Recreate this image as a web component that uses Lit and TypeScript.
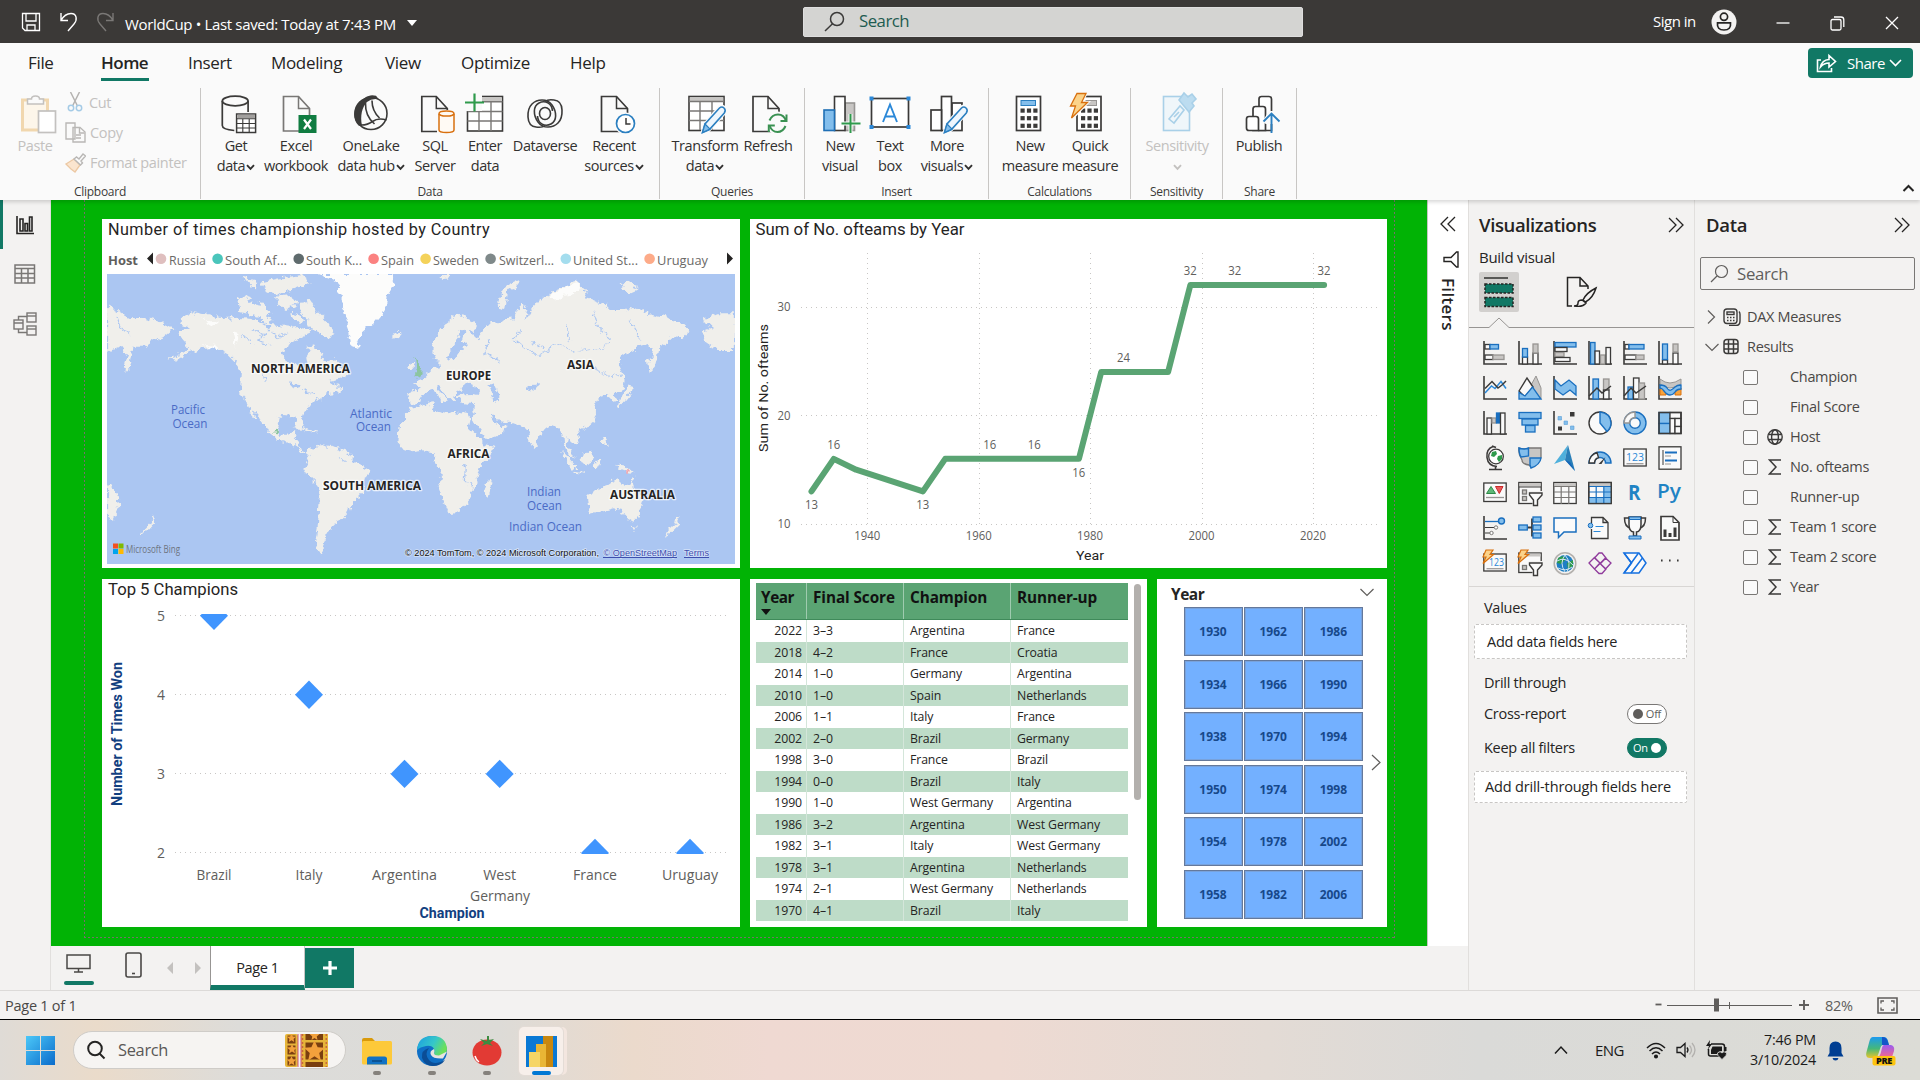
import { LitElement, html, svg, css, nothing } from "lit";
import { customElement, property } from "lit/decorators.js";

/* ---------- shared drawing helpers ---------- */
const INK = "#3b3a39";
const UI = "'Open Sans','Noto Sans',sans-serif";

/** SVG text fitted to the width given. */
const fit = (x: number, y: number, w: number, size: number, text: string, fill = "#605e5c", weight = 400, family = UI) =>
  svg`<text x=${x} y=${y} textLength=${w} lengthAdjust="spacingAndGlyphs" font-size=${size} font-weight=${weight} font-family=${family} fill=${fill}>${text}</text>`;

const chev = (cls = "") => html`<svg class="chev ${cls}" width="9" height="7" viewBox="0 0 9 7"><path d="M1 1.2 4.5 4.9 8 1.2" fill="none" stroke="currentColor" stroke-width="1.9"/></svg>`;
const docPath = (x: number, w: number, h = 35, s = INK) =>
  svg`<path d="M${x} 2.5h${w - 11}l11 12v${h - 12}h${-w}z" fill="#fafafa" stroke=${s} stroke-width="1.7"/><path d="M${x + w - 11} 2.5v12h11" fill="none" stroke=${s} stroke-width="1.5"/>`;
const pencil = svg`<path d="M-7 38.5l2.5-8L10 13.500q2-2 4.500 0t.5 5L-1 36z" fill="#fafafa" stroke="#fafafa" stroke-width="4"/><path d="M-7 38.5l2.500-8.500L10 14q2.300-2 4.500 0t.3 5L0 35.500z" fill="#eef6fd" stroke="#2b7fc0" stroke-width="1.6"/><path d="M-7 38.500l2.500-8.500 5 5z" fill="#83beec" stroke="#2b7fc0" stroke-width="1.2"/>`;
const dots = (x: number, y: number) => [0, 1, 2].map((r) => [0, 1, 2].map((c) => svg`<rect x=${x + c * 6.4} y=${y + r * 7.6} width="4.200" height="4.200" fill=${INK}/>`));

const RIBBON: Record<string, unknown> = {
  getdata: svg`<g fill="none" stroke=${INK} stroke-width="1.7"><ellipse cx="-.8" cy="7" rx="12.900" ry="4.800"/><path d="M-13.700 7v24.500q0 4 12 5M12.100 7v11"/></g><rect x=".6" y="20" width="19" height="18.500" fill="#fff" stroke=${INK} stroke-width="1.5"/><rect x="1.400" y="20.600" width="17.500" height="3.500" fill="#a19f9d"/><path d="M.6 24.800h19M.6 29.500h19M.6 34h19M6.800 24.800v14M13.200 24.800v14" stroke=${INK} stroke-width="1.100"/>`,
  excel: svg`${docPath(-12.5, 26, 34.5, "#797775")}<rect x="2.500" y="21" width="18" height="18" fill="#107c41"/><path d="M8 25.500l7 9.500M15 25.500l-7 9.500" stroke="#fff" stroke-width="2.200"/>`,
  onelake: svg`<circle cx="0" cy="19.500" r="16" fill="#fafafa" stroke=${INK} stroke-width="1.600"/><path d="M5 1.800C-2-.5-7 4-11.500 8.500-19 16-18 26-12.500 31.500q2 .5 3.500 0C-11 22-9 13-4 8q5-4 12-2.500z" fill=${INK}/><path d="M-5.500 9Q-6 22 3.500 30M1 6.500Q1 17 8.500 24M-11 31q7 .5 12.500-3.500T15.500 26" fill="none" stroke=${INK} stroke-width="1.600"/>`,
  sql: svg`${docPath(-13.2, 25.500)}<rect x="2" y="16" width="18" height="24" fill="#fafafa"/><g fill="#fffaf4" stroke="#d8700f" stroke-width="1.500"><path d="M4 20v16q0 2.500 7.500 2.500T19 36V20"/><ellipse cx="11.500" cy="19.500" rx="7.500" ry="2.600"/></g>`,
  enter: svg`<rect x="-17.500" y="2.500" width="35" height="34.500" fill="#fff" stroke=${INK} stroke-width="1.600"/><rect x="-16.700" y="3.300" width="33.500" height="4" fill="#c8c6c4"/><path d="M-17.500 7.800h35M-17.500 17.500h35M-17.500 27h35M-6 8v29M6 8v29" stroke="#797775" stroke-width="1.400"/><path d="M-22-1H-3v18h-19z" fill="#fafafa"/><path d="M-10.500-.5v18M-20 8.500h19" stroke="#2f9a4c" stroke-width="2.200"/>`,
  dataverse: svg`<g fill="none" stroke=${INK} stroke-width="1.600"><ellipse cx="0" cy="19.500" rx="5.500" ry="6"/><path d="M-9 33C-20 32-18 15-13 10S2 4 7 11s5 16-1 19-13 0-13.500-8"/><path d="M-9 33Q-3 34 0 31.500M9 6c11 1 9 18 4 23s-15 6-20-1-5-16 1-19 13 0 13.500 8"/><path d="M9 6Q3 5 0 7.500"/></g>`,
  recent: svg`${docPath(-12.500, 26)}<circle cx="11.500" cy="29.500" r="11" fill="#fafafa"/><circle cx="11.500" cy="29.500" r="9" fill="#fff" stroke="#2b7fc0" stroke-width="1.700"/><path d="M12 24v6h4.500" fill="none" stroke=${INK} stroke-width="1.500"/>`,
  transform: svg`<rect x="-16" y="2.500" width="35" height="34" fill="#fff" stroke=${INK} stroke-width="1.600"/><rect x="-15.200" y="3.300" width="33.500" height="3.800" fill="#c8c6c4"/><path d="M-16 7.500h35M-16 17h35M-16 26.500h35M-5 8v28M7 8v28" stroke="#797775" stroke-width="1.400"/><g transform="translate(4.500 0)">${pencil}</g>`,
  refresh: svg`${docPath(-15, 26)}<circle cx="9.500" cy="29" r="11.500" fill="#fafafa"/><g fill="none" stroke="#3a9152" stroke-width="2"><path d="M1.500 26.500Q4 20.500 10 20.500t8 6.500M17.500 32q-2.500 6-8 6t-8-6.500"/><path d="M18.500 20.500v6.500h-6M.8 38v-6.500h6"/></g>`,
  newvisual: svg`<g stroke=${INK} stroke-width="1.600"><rect x="5" y="9" width="9.500" height="27.500" fill="#c8c6c4" stroke="#979593"/><rect x="-5.500" y="2.500" width="10.500" height="34" fill="#fff"/><rect x="-16" y="16" width="10.500" height="20.500" fill="#83beec" stroke="#1f6fb5"/></g><path d="M8.500 20h4v7.500h8v4h-8V40h-4v-8.500h-7v-4h7z" fill="#fafafa"/><path d="M10.500 20v19M1.500 29.500h19" stroke="#2f9a4c" stroke-width="2"/>`,
  textbox: svg`<rect x="-18.500" y="4.500" width="37" height="28.500" fill="#fff" stroke=${INK} stroke-width="1.700"/><g fill="#2b88d8"><rect x="-20.500" y="2.500" width="4" height="4"/><rect x="16.500" y="2.500" width="4" height="4"/><rect x="-20.500" y="31" width="4" height="4"/><rect x="16.500" y="31" width="4" height="4"/></g><path d="M-7 28L0 10.500 7 28M-4.500 22.500h9" fill="none" stroke="#2b88d8" stroke-width="1.900"/>`,
  more: svg`<g stroke=${INK} stroke-width="1.700" fill="#fff"><rect x="5" y="9" width="10" height="27.500"/><rect x="-5.500" y="2.500" width="10" height="34"/><rect x="-16" y="16" width="10.500" height="20.500"/></g><g transform="translate(4.500 0)">${pencil}</g>`,
  calc: svg`<rect x="-13.500" y="2.500" width="24" height="34" fill="#fff" stroke=${INK} stroke-width="1.700"/><rect x="-9" y="6.500" width="14.500" height="5" fill="#83beec" stroke="#2b7fc0"/>${dots(-9.500, 14.500)}`,
  quick: svg`<rect x="-13" y="2.500" width="24" height="34" fill="#fff" stroke=${INK} stroke-width="1.700"/><rect x="-4" y="6.500" width="10.500" height="5" fill="#c8c6c4" stroke="#979593"/>${dots(-9, 14.500)}<path d="M-14-.5h10l-4.500 9h6L-18.500 25l4-12h-5z" fill="#fafafa" stroke="#fafafa" stroke-width="3"/><path d="M-13-.5h9l-4.500 9h6L-18.500 24l4-12h-5z" fill="#fbd38a" stroke="#d8700f" stroke-width="1.300"/>`,
  sens: svg`<g stroke="#a9d0e8" fill="#eff6fa" stroke-width="1.600"><rect x="-13.500" y="2.500" width="26" height="34"/><path d="M-8 25L3 12l4 4L-3 29zM-3 23l5-5"/><path d="M2 6l5-7 4 4 4-3 4 5-4 4 2 3-5 6z" fill="#bcdcf0"/></g>`,
  publish: svg`<g fill="#fff" stroke=${INK} stroke-width="1.700"><path d="M0 36.500V5q0-2.500 2.500-2.500H10q2.500 0 2.500 2.500v31.500z"/><path d="M-6 36.500V15q0-2.500 2.500-2.500H4q2.500 0 2.500 2.500v21.500z"/><path d="M-12.500 34V25q0-2.500 2.500-2.500h7q2.500 0 2.500 2.500v11.500H-10q-2.500 0-2.500-2.500z"/></g><path d="M10 17h12v23h-7V30h-8l-4-2z" fill="#fafafa"/><path d="M12.500 39V20M4.500 27.500l8-8 8 8" fill="none" stroke="#2b7fc0" stroke-width="1.900"/>`,
};

type Btn = { w: number; icon: string; a: string; b?: string; drop?: boolean; off?: boolean };
const GROUPS: { name: string; w: number; pad: number; items: Btn[] }[] = [
  { name: "Data", w: 459, pad: 8, items: [
    { w: 54, icon: "getdata", a: "Get", b: "data", drop: true }, { w: 66, icon: "excel", a: "Excel", b: "workbook" },
    { w: 84, icon: "onelake", a: "OneLake", b: "data hub", drop: true }, { w: 44, icon: "sql", a: "SQL", b: "Server" },
    { w: 56, icon: "enter", a: "Enter", b: "data" }, { w: 64, icon: "dataverse", a: "Dataverse" },
    { w: 74, icon: "recent", a: "Recent", b: "sources", drop: true } ] },
  { name: "Queries", w: 145, pad: 11, items: [ { w: 68, icon: "transform", a: "Transform", b: "data", drop: true }, { w: 58, icon: "refresh", a: "Refresh" } ] },
  { name: "Insert", w: 184, pad: 10, items: [ { w: 50, icon: "newvisual", a: "New", b: "visual" }, { w: 50, icon: "textbox", a: "Text", b: "box" }, { w: 64, icon: "more", a: "More", b: "visuals", drop: true } ] },
  { name: "Calculations", w: 142, pad: 11, items: [ { w: 60, icon: "calc", a: "New", b: "measure" }, { w: 60, icon: "quick", a: "Quick", b: "measure" } ] },
  { name: "Sensitivity", w: 92, pad: 6, items: [ { w: 80, icon: "sens", a: "Sensitivity", b: "", drop: true, off: true } ] },
  { name: "Share", w: 74, pad: 6, items: [ { w: 60, icon: "publish", a: "Publish" } ] },
];

/* ---------- title bar and ribbon ---------- */
@customElement("title-bar")
class TitleBar extends LitElement {
  static styles = css`
    :host { display: flex; height: 43px; background: #3b3937; color: #fff; font: 15px/1 "Open Sans", sans-serif; letter-spacing: -0.5px; align-items: center; }
    .left { width: 803px; display: flex; align-items: center; }
    .left svg { margin-left: 21px; margin-right: 18px; flex: none; }
    .left svg + svg { margin: 0 17px 0 0; }
    .name { margin-left: -8px; padding-top: 5px; width: 282px; white-space: pre; letter-spacing: -0.340px; }
    .caret { border: 5px solid transparent; border-top: 6px solid #fff; border-bottom: 0; margin-top: 2px; }
    .search { width: 500px; height: 30px; box-sizing: border-box; background: #d4d4d2; border: 1px solid #dedede; border-radius: 2px; color: #1e5b50; font-size: 16.8px; display: flex; align-items: center; padding-left: 20px; gap: 14px; letter-spacing: -0.500px; }
    .right { flex: 1; display: flex; align-items: center; }
    .sign { margin-left: 350px; width: 58px; white-space: nowrap; }
    .right svg { flex: none; }
    .win { margin-left: 40px; }
    .win.first { margin-left: 39px; }
  `;
  render() {
    return html`
      <div class="left">
        <svg width="20" height="20" viewBox="0 0 20 20" fill="none" stroke="#fff" stroke-width="1.300"><path d="M1.500 1.500h17v17H4l-2.500-2.500zM5 1.500v7.500h10V1.500M6 18.500v-5.500h8v5.500"/></svg>
        <svg width="20" height="20" viewBox="0 0 20 20" fill="none" stroke="#fff" stroke-width="1.400"><path d="M2 1v7.500h7M2 8.500C5 3 9 1.500 12 1.500c6 0 6.500 6.500 3 10.500L9 19"/></svg>
        <svg width="20" height="20" viewBox="0 0 20 20" fill="none" stroke="#7a7876" stroke-width="1.400"><path d="M17 1v7.500h-7M17 8.500C14 3 10 1.500 7 1.500c-6 0-6.500 6.500-3 10.500L10 19"/></svg>
        <span class="name">WorldCup • Last saved: Today at 7:43 PM</span><i class="caret"></i>
      </div>
      <div class="search">
        <svg width="21" height="21" viewBox="0 0 21 21" fill="none" stroke="#3b3a39" stroke-width="1.500"><circle cx="13" cy="8" r="6.500"/><path d="M8.500 12.700L1 20"/></svg>Search
      </div>
      <div class="right">
        <span class="sign">Sign in</span>
        <svg width="26" height="26" viewBox="0 0 26 26"><circle cx="13" cy="13" r="12.500" fill="#f3f2f1"/><g fill="none" stroke="#252423" stroke-width="1.700"><circle cx="13" cy="7.800" r="3.600"/><path d="M6.500 13.800h13q.8 7.200-6.500 7.200t-6.500-7.200z"/></g></svg>
        <svg class="win first" width="14" height="14" viewBox="0 0 14 14"><path d="M.5 8h13" stroke="#fff" stroke-width="1.300"/></svg>
        <svg class="win" width="15" height="15" viewBox="0 0 15 15" fill="none" stroke="#fff" stroke-width="1.300" style="margin-top:3px"><rect x="1" y="3.500" width="10" height="10.500" rx="1.500"/><path d="M4 1h7q2.800 0 2.800 2.800V11"/></svg>
        <svg class="win" width="14" height="14" viewBox="0 0 14 14" style="margin-top:2px"><path d="M1 1l12 12M13 1L1 13" stroke="#fff" stroke-width="1.300"/></svg>
      </div>`;
  }
}

@customElement("ribbon-bar")
class RibbonBar extends LitElement {
  static styles = css`
    :host { display: flex; flex-direction: column; height: 157px; background: #fafafa; font-family: "Open Sans", sans-serif; color: #323130; position: relative; z-index: 2; box-shadow: 0 2px 4px rgba(0,0,0,.16); }
    .tabs { display: flex; height: 45px; align-items: flex-start; padding-left: 28px; }
    .tab { font-size: 17px; line-height: 24px; height: 35px; padding-top: 8px; letter-spacing: -0.330px; color: #252423; box-sizing: border-box; white-space: nowrap; }
    .tab.on { font-weight: 600; letter-spacing: -0.500px; }
    .tab.on span { display: block; width: 48px; height: 30px; border-bottom: 3px solid #117865; box-sizing: border-box; }
    .share { margin: 5px 7px 0 auto; width: 105px; height: 30px; border-radius: 4px; background: #117865; color: #fff; display: flex; align-items: center; font-size: 15px; letter-spacing: -0.5px; box-sizing: border-box; padding-left: 8px; gap: 10px; }
    .share .c { margin-left: -6px; }
    .groups { display: flex; height: 111px; }
    .group { border-right: 1px solid #c8c6c4; box-sizing: border-box; display: flex; flex-direction: column; justify-content: space-between; }
    .row { display: flex; }
    .btn { display: flex; flex-direction: column; align-items: center; padding-top: 6px; font-size: 14.500px; line-height: 20px; letter-spacing: -0.420px; white-space: nowrap; }
    .btn svg.ic { overflow: visible; margin-bottom: 2px; }
    .btn.off { color: #c3c1bf; }
    .chev { margin-left: 1px; }
    .cap { text-align: center; font-size: 12px; line-height: 14px; letter-spacing: -0.280px; color: #3b3a39; }
    .clip { width: 201px; }
    .clip .row { padding-left: 8px; }
    .list { display: flex; flex-direction: column; margin: -1px 0 0 3px; color: #c3c1bf; font-size: 14.500px; letter-spacing: -0.330px; }
    .list div { height: 30px; display: flex; align-items: center; gap: 4px; white-space: nowrap; }
    .list svg { flex: none; }
    .up { margin: 96px 5px 0 auto; }
  `;
  render() {
    const tabs: [string, number][] = [["File", 73], ["Home", 87], ["Insert", 83], ["Modeling", 114], ["View", 76], ["Optimize", 109], ["Help", 50]];
    return html`
      <div class="tabs">
        ${tabs.map(([t, w]) => html`<div class="tab ${t === "Home" ? "on" : ""}" style="width:${w}px"><span>${t}</span></div>`)}
        <div class="share">
          <svg width="21" height="20" viewBox="0 0 21 20" fill="none" stroke="#fff" stroke-width="1.600"><path d="M5 7H1.500v11.500h14V15M4.500 14Q6 7 13 6.500V2.500l6.500 6-6.500 5.500v-4Q8 10 4.500 14z"/></svg>Share
          <svg class="c" width="13" height="8" viewBox="0 0 13 8"><path d="M1 1l5.500 5.500L12 1" fill="none" stroke="#fff" stroke-width="1.600"/></svg>
        </div>
      </div>
      <div class="groups">
        <div class="group clip">
          <div class="row">
            <div class="btn off" style="width:54px">
              <svg class="ic" width="40" height="40" viewBox="-20 0 40 40"><rect x="-12.500" y="6" width="25" height="30" fill="#fdf6ea" stroke="#f1d7ae" stroke-width="3"/><path d="M-7.500 10V5h4q0-3 4-3t4 3h4v5z" fill="#fafafa" stroke="#c3c1bf" stroke-width="1.500"/><rect x="3.500" y="17" width="17" height="21.500" fill="#fff" stroke="#c3c1bf" stroke-width="1.700"/></svg>
              Paste
            </div>
            <div class="list">
              <div><svg width="20" height="20" viewBox="0 0 20 20" fill="none" stroke-width="1.500"><path d="M5.500 0l7 14M14.500 0L7.500 14" stroke="#b5b3b1"/><circle cx="6" cy="16" r="2.700" stroke="#a5cbe6"/><circle cx="14" cy="16" r="2.700" stroke="#a5cbe6"/></svg>Cut</div>
              <div><svg width="21" height="21" viewBox="0 0 21 21" fill="#fafafa" stroke="#b9b7b5" stroke-width="1.400"><path d="M1 1h9v16H1zM8 5.500h7l5 4.500v10H8z"/><path d="M14.500 6v5h5M11 13h5M11 16h5"/></svg>Copy</div>
              <div><svg width="21" height="21" viewBox="0 0 21 21"><path d="M1 12l8-5 6 6-5 7-4-3z" fill="#fbe5cf" stroke="#ecc8a3" stroke-width="1.300"/><path d="M9 7l2.500-2 2.500 2 4-5 2.500 2-4.500 5 1.500 2-2 2z" fill="#fafafa" stroke="#b9b7b5" stroke-width="1.400"/></svg>Format painter</div>
            </div>
          </div>
          <div class="cap">Clipboard</div>
        </div>
        ${GROUPS.map((g) => html`
          <div class="group" style="width:${g.w}px">
            <div class="row" style="padding-left:${g.pad}px">
              ${g.items.map((b) => html`<div class="btn ${b.off ? "off" : ""}" style="width:${b.w}px">
                <svg class="ic" width="40" height="40" viewBox="-20 0 40 40">${RIBBON[b.icon]}</svg>
                <span>${b.a}</span>${b.b === undefined ? nothing : html`<span>${b.b}${b.drop ? chev() : nothing}</span>`}
              </div>`)}
            </div>
            <div class="cap">${g.name}</div>
          </div>`)}
        <svg class="up" width="13" height="8" viewBox="0 0 13 8"><path d="M1.500 7l5-5 5 5" fill="none" stroke="#252423" stroke-width="2"/></svg>
      </div>`;
  }
}

/* ---------- visuals ---------- */
@customElement("map-visual")
class MapVisual extends LitElement {
  static styles = css`
    :host { display: block; }
    .title { font: 16.200px/18px Roboto, sans-serif; letter-spacing: 0.450px; color: #252423; padding: 2px 0 0 6px; white-space: nowrap; height: 33px; box-sizing: border-box; }
    svg { display: block; margin-left: 5px; }
    .legend { height: 22px; }
  `;
  render() {
    const items: [string, string, number, number, number][] = [
      ["Russia", "#dfbfbf", 161, 169, 206], ["South Af...", "#4ac5bb", 217.6, 225, 287], ["South K...", "#5f6b6d", 298.700, 306, 362], ["Spain", "#fb8281", 373.600, 381, 414],
      ["Sweden", "#f4d25a", 425.600, 433, 479], ["Switzerl...", "#7f898a", 490.600, 499, 554], ["United St...", "#a4ddee", 565.800, 573, 638], ["Uruguay", "#fdab89", 649.600, 657, 708]];
    const land: string[] = [
      "M372 372L400 352 430 360 465 372 490 368 520 372 545 385 575 390 600 395 620 392 640 400 632 420 605 440 585 460 583 480 592 500 612 508 620 520 628 540 636 520 632 490 640 470 632 452 650 448 660 475 672 500 690 490 705 515 722 540 700 552 678 558 695 575 708 572 690 595 672 598 660 612 645 622 630 648 622 665 626 690 620 705 612 690 608 668 600 662 585 660 575 672 572 700 578 722 595 722 603 708 614 710 606 730 616 738 617 760 630 768 648 758 643 777 620 768 600 745 580 738 556 712 548 690 535 665 523 645 532 682 520 660 508 625 496 600 496 560 497 525 485 500 470 478 440 455 415 460 385 478 360 492 392 458 375 430 368 410 390 395 370 385z",
      "M492 310L508 298 520 325 545 330 560 352 545 370 520 360 495 350z", "M500 248L530 258 528 285 512 270z", "M540 262L570 252 620 240 640 262 610 280 570 300 548 285z", "M570 305L600 300 612 330 590 345 572 330z", "M618 320L640 318 655 350 678 385 690 420 676 432 660 415 640 400 632 370 620 350z", "M600 350L622 360 625 385 605 378z", "M590 420L610 415 618 432 600 440z", "M540 360L560 372 555 385 538 375z",
      "M650 755L665 750 690 758 715 765 725 790 735 805 762 825 760 845 752 865 748 895 735 915 722 935 718 955 705 975 695 978 692 990 680 1005 672 1025 668 1045 665 1062 668 1084 655 1070 650 1040 655 1000 658 950 660 900 655 870 640 850 628 820 632 800 640 780 645 765z",
      "M845 640L860 635 895 625 900 650 925 658 935 650 965 658 972 680 985 710 998 748 1018 752 1015 775 990 815 985 840 988 870 975 890 972 905 955 935 945 952 925 955 915 920 905 880 912 845 905 815 897 800 895 775 870 768 850 772 835 765 820 740 822 700 835 670z",
      "M1010 850L1016 870 1008 908 1001 905 1000 880z",
      "M842 590L862 588 865 570 856 560 870 552 885 535 895 520 912 515 910 500 898 498 892 470 895 440 905 415 920 385 940 362 960 368 985 385 980 405 965 402 985 430 1000 400 1010 385 1030 378 1045 372 1060 370 1070 340 1076 318 1088 345 1082 380 1095 350 1110 320 1140 290 1165 275 1185 258 1208 285 1212 308 1250 330 1260 345 1285 345 1305 335 1330 350 1370 365 1410 385 1425 405 1405 430 1385 425 1375 445 1358 458 1356 485 1350 520 1340 532 1337 500 1345 480 1350 455 1335 450 1310 462 1285 480 1278 510 1290 545 1285 580 1270 590 1272 615 1262 622 1255 600 1240 600 1230 620 1232 650 1225 680 1205 700 1190 705 1195 730 1190 748 1178 745 1170 730 1167 745 1180 775 1186 795 1172 775 1162 745 1160 715 1150 700 1140 688 1125 700 1112 725 1105 755 1100 762 1090 730 1088 700 1070 690 1055 682 1030 675 1012 655 1015 672 1030 690 1045 692 1040 710 1020 725 1000 735 990 715 970 665 978 650 980 628 955 625 945 605 955 598 975 597 990 600 985 580 960 575 950 590 940 600 938 625 928 610 915 590 905 575 900 580 915 600 925 612 912 622 905 600 890 585 875 598 865 620 845 625z",
      "M221 330L240 345 270 370 300 368 330 380 360 402 340 425 320 435 300 455 275 455 270 500 262 532 255 510 262 480 250 455 221 470z",
      "M1516 355L1480 355 1450 375 1475 395 1448 410 1455 440 1480 465 1516 465z",
      "M1212 900L1240 880 1258 862 1275 850 1288 868 1300 872 1305 848 1315 890 1328 920 1322 950 1310 978 1292 970 1282 945 1265 940 1245 948 1217 958 1215 930z",
      "M221 865L240 890 246 930 235 970 221 975z", "M1303 992L1312 995 1308 1006z", "M1398 962L1404 985 1390 1005 1372 1026 1380 1005 1395 985z", "M316 962L318 985 305 1005 290 1028 296 1005 310 985z",
      "M1157 768L1172 788 1187 815 1182 822 1168 800z", "M1197 785L1215 765 1222 785 1212 812 1200 805z", "M1184 824L1206 828 1205 833 1184 829z", "M1268 808L1292 812 1310 838 1297 834 1278 824z", "M1228 795L1240 790 1236 815 1228 818z", "M1240 720L1248 722 1254 755 1244 745z",
      "M1288 590L1296 572 1310 575 1298 600 1284 625 1272 640 1275 625z", "M1070 256L1074 266 1046 292 1040 345 1030 342 1028 318 1036 282z", "M908 240L930 240 922 258z", "M1280 270L1300 262 1320 282 1300 295z", "M845 508L851 506 852 528 842 528z", "M600 692L640 705 660 712 640 712z", "M805 415L825 408 827 425 812 434z", "M700 520L718 540 704 552z", "M345 492L395 470 360 498z",
    ];
    const sea: string[] = [
      "M932 455L945 430 950 400 958 410 952 440 965 448 950 470 935 500 920 492z", "M952 580L962 565 975 572 990 585 985 595 960 592z", "M1010 570L1020 565 1028 590 1028 625 1018 622 1015 600z",
      "M1085 575L1110 565 1105 588 1088 582z", "M955 805L962 812 958 822z", "M596 562L625 570 612 582 600 575z", "M625 575L640 590 630 598z", "M540 385L560 395 555 410z", "M965 695L970 662 1000 720 995 735z", "M885 590L890 600 888 612z",
    ];
    const rivers = "M1075 400L1060 430 1085 460 1110 480 1150 450 1190 470 1240 460 1258 440M1095 440L1120 460M1225 350L1235 400 1260 430M1220 520L1260 545 1285 540M960 820L958 860 975 880M520 400L545 420 530 440 560 450M500 420L520 440M540 520L545 560M1000 470L1030 500M1010 440L1000 470M560 410L575 430 590 410M1300 380L1320 430M1170 390L1175 440M640 590L650 600M700 790L715 800M240 360L250 400 270 420";
    return html`
      <div class="title">Number of times championship hosted by Country</div>
      <svg class="legend" width="628" height="22" viewBox="107 252 628 22">
        ${fit(108, 265, 30, 13, "Host", "#605e5c", 700)}
        <path d="M153 252.500v12l-6-6zM727 252.500v12l6-6z" fill="#252423"/>
        ${items.map(([t, c, cx, x1, x2]) => svg`<circle cx=${cx} cy="258.800" r="5.300" fill=${c}/>${fit(x1, 265, x2 - x1, 13, t, "#6b6967")}`)}
      </svg>
      <svg width="628" height="290" viewBox="107 274 628 290">
        <defs><filter id="coast" x="0" y="0" width="100%" height="100%"><feTurbulence type="fractalNoise" baseFrequency=".16" numOctaves="3" seed="4"/><feDisplacementMap in="SourceGraphic" scale="9" xChannelSelector="R" yChannelSelector="G"/></filter>
        <clipPath id="frame"><rect x="107" y="274" width="628" height="290"/></clipPath></defs>
        <rect x="107" y="274" width="628" height="290" fill="#abc6f2"/>
        <g clip-path="url(#frame)"><g filter="url(#coast)"><g transform="translate(0 195) scale(.48470 .33333)">
          <rect x="150" y="150" width="1500" height="1050" fill="#abc6f2"/>
          <path d=${land.join("")} fill="#f0efeb"/>
          <path d="M655 237L680 250 702 268 700 300 708 340 715 380 720 420 725 450 735 455 742 430 750 410 775 380 787 360 795 340 800 300 812 270 808 237z" fill="#fcfcfb"/>
          <path d="M415 372L450 380 440 395zM480 415L492 420 486 455zM1135 300L1165 275 1190 265 1200 290 1165 300 1150 318zM420 450L445 452 455 466z" fill="#fcfcfb"/>
          <path d="M855 488L866 508 874 530 860 545 853 542 860 525z" fill="#8cc5a0"/><path d="M1292 818L1300 832 1292 836z" fill="#eda7b3"/><circle cx="570" cy="711" r="4" fill="#8cc5a0"/>
          <path d=${sea.join("")} fill="#abc6f2"/>
          <path d=${rivers} fill="none" stroke="#abc6f2" stroke-width="2.500"/>
        </g></g></g>
        <g stroke="#fff" stroke-width="2.500" stroke-opacity=".7" paint-order="stroke" stroke-linejoin="round">
          ${fit(251, 373, 99, 11.800, "NORTH AMERICA", "#252423", 700)}${fit(446, 380, 45, 11.800, "EUROPE", "#252423", 700)}${fit(567, 369, 27, 11.800, "ASIA", "#252423", 700)}
          ${fit(447.500, 457.500, 42, 11.800, "AFRICA", "#252423", 700)}${fit(323, 490, 98, 11.800, "SOUTH AMERICA", "#252423", 700)}${fit(610, 499, 65, 11.800, "AUSTRALIA", "#252423", 700)}
        </g>
        ${fit(171, 414, 34, 12.500, "Pacific", "#4a6bc6")}${fit(172.500, 428, 35, 12.500, "Ocean", "#4a6bc6")}
        ${fit(350, 417.500, 42, 12.500, "Atlantic", "#4a6bc6")}${fit(356, 431, 35, 12.500, "Ocean", "#4a6bc6")}
        ${fit(527, 496, 34, 12.500, "Indian", "#4a6bc6")}${fit(527, 510, 35, 12.500, "Ocean", "#4a6bc6")}${fit(509, 530.500, 73, 12.500, "Indian Ocean", "#4a6bc6")}
        <rect x="113" y="543.500" width="5" height="5" fill="#f25022"/><rect x="118.500" y="543.500" width="5" height="5" fill="#7fba00"/><rect x="113" y="549" width="5" height="5" fill="#00a4ef"/><rect x="118.500" y="549" width="5" height="5" fill="#ffb900"/>
        ${fit(126, 553, 54, 10.500, "Microsoft Bing", "#6d7480", 400)}
        <g stroke="#fff" stroke-width="1.500" stroke-opacity=".5" paint-order="stroke">
          ${fit(405, 555.500, 194, 9.800, "© 2024 TomTom, © 2024 Microsoft Corporation,", "#111", 400, "'Liberation Sans',sans-serif")}
          ${fit(603.500, 555.500, 73.500, 9.800, "© OpenStreetMap", "#3e4fae", 400, "'Liberation Sans',sans-serif")}${fit(684, 555.500, 25, 9.800, "Terms", "#3e4fae", 400, "'Liberation Sans',sans-serif")}
        </g>
        <path d="M603 557.500h74M684 557.500h25" stroke="#3e4fae"/>
      </svg>`;
  }
}

@customElement("line-visual")
class LineVisual extends LitElement {
  static styles = css`:host { display: block; } svg { display: block; }`;
  render() {
    const X = (yr: number) => 867.2 + (yr - 1940) * 5.572;
    const Y = (v: number) => 524 - (v - 10) * 10.86;
    const data: [number, number][] = [[1930, 13], [1934, 16], [1938, 15], [1950, 13], [1954, 16], [1978, 16], [1982, 24], [1994, 24], [1998, 32], [2022, 32]];
    const labels: [number, number, number][] = [[1930, 13, 1], [1934, 16, -1], [1950, 13, 1], [1962, 16, -1], [1970, 16, -1], [1978, 16, 1], [1986, 24, -1], [1998, 32, -1], [2006, 32, -1], [2022, 32, -1]];
    return html`<svg width="637" height="349" viewBox="750 219 637 349">
      ${fit(755.500, 235, 209, 16.200, "Sum of No. ofteams by Year", "#252423", 400, "Roboto,sans-serif")}
      <g stroke="#c8c6c4" stroke-width="1" stroke-dasharray="1 4">
        ${[10, 20, 30].map((v) => svg`<path d="M801 ${Math.round(Y(v)) + 0.5}H1380"/>`)}
        ${[1940, 1960, 1980, 2000, 2020].map((v) => svg`<path d="M${Math.round(X(v)) + 0.5} 253V524"/>`)}
      </g>
      <polyline points=${data.map(([a, b]) => `${X(a)},${Y(b)}`).join(" ")} fill="none" stroke="#5aa473" stroke-width="6" stroke-linejoin="round" stroke-linecap="round"/>
      ${labels.map(([yr, v, d]) => fit(X(yr) - 6.600, Y(v) + (d > 0 ? 18 : -10), 13, 12.200, String(v)))}
      ${[10, 20, 30].map((v) => fit(777.500, Y(v) + 4.200, 13, 12.200, String(v)))}
      ${[1940, 1960, 1980, 2000, 2020].map((v) => fit(X(v) - 13, 540, 26, 12.200, String(v)))}
      ${fit(1076, 560, 28, 13.600, "Year", "#252423", 400, "Roboto,sans-serif")}
      <g transform="translate(768 452) rotate(-90)">${fit(0, 0, 128, 13.400, "Sum of No. ofteams", "#252423", 400, "Roboto,sans-serif")}</g>
    </svg>`;
  }
}

@customElement("champions-visual")
class ChampionsVisual extends LitElement {
  static styles = css`:host { display: block; } svg { display: block; }`;
  render() {
    const cats: [string, number, number, number][] = [["Brazil", 214, 35, 5], ["Italy", 309, 27, 4], ["Argentina", 404.500, 65, 3], ["West", 499.700, 33, 3], ["France", 595, 44, 2], ["Uruguay", 690, 56, 2]];
    const Y = (v: number) => 616 + (5 - v) * 79.1;
    return html`<svg width="638" height="348" viewBox="102 579 638 348">
      <clipPath id="plot"><rect x="170" y="614" width="570" height="240"/></clipPath>
      ${fit(108, 595, 130, 16.200, "Top 5 Champions", "#252423", 400, "Roboto,sans-serif")}
      <g stroke="#c8c6c4" stroke-dasharray="1 4">${[5, 4, 3, 2].map((v) => svg`<path d="M175 ${Math.round(Y(v)) - 0.5}H730"/>`)}</g>
      ${[5, 4, 3, 2].map((v) => fit(157, Y(v) + 5, 8, 14.800, String(v)))}
      <g clip-path="url(#plot)" fill="#4095fe">${cats.map(([, x, , v]) => svg`<path d="M${x} ${Y(v) - 14.500}l14 14.200-14 14.200-14-14.200z"/>`)}</g>
      ${cats.map(([n, x, w]) => fit(x - w / 2, 880, w, 14.800, n))}${fit(470, 901, 60, 14.800, "Germany")}
      ${fit(419.500, 918, 65, 13.800, "Champion", "#12407f", 700, "Roboto,sans-serif")}
      <g transform="translate(121.500 806) rotate(-90)">${fit(0, 0, 144, 13.800, "Number of Times Won", "#12407f", 700, "Roboto,sans-serif")}</g>
    </svg>`;
  }
}

@customElement("results-visual")
class ResultsVisual extends LitElement {
  static styles = css`
    :host { display: flex; padding: 4px 6px; gap: 6px; font: 12.300px/21px "Open Sans", sans-serif; letter-spacing: -0.120px; color: #252423; box-sizing: border-box; }
    .grid { width: 372px; }
    .row { display: grid; grid-template-columns: 51px 97px 107px 117px; height: 21.500px; box-sizing: border-box; }
    .row:nth-child(odd) { background: #bedcc8; }
    .row span { padding-left: 6px; border-right: 1px solid #d4e6da; white-space: nowrap; box-sizing: border-box; }
    .row span:last-child { border-right: 0; }
    .row .yr { text-align: right; padding: 0 4px 0 0; }
    .row.head { background: #5aa473; height: 37px; font: 700 15.300px/21px "Open Sans", sans-serif; letter-spacing: -0.080px; color: #111; padding-top: 4px; border-bottom: 1px solid #3f8a5a; }
    .row.head span { border-color: #9fcbaf; margin-top: -4px; padding-top: 4px; }
    .row.head .y { padding-left: 5px; letter-spacing: -0.400px; }
    .sort { display: block; width: 0; border: 5px solid transparent; border-top: 6px solid #111; border-bottom: 0; margin-top: 1px; }
    .bar { width: 7px; height: 216px; border-radius: 4px; background: #b3b0ad; margin-top: 1px; }
  `;
  render() {
    const rows = ["2022|3–3|Argentina|France", "2018|4–2|France|Croatia", "2014|1–0|Germany|Argentina", "2010|1–0|Spain|Netherlands", "2006|1–1|Italy|France", "2002|2–0|Brazil|Germany", "1998|3–0|France|Brazil", "1994|0–0|Brazil|Italy", "1990|1–0|West Germany|Argentina", "1986|3–2|Argentina|West Germany", "1982|3–1|Italy|West Germany", "1978|3–1|Argentina|Netherlands", "1974|2–1|West Germany|Netherlands", "1970|4–1|Brazil|Italy"];
    return html`<div class="grid">
        <div class="row head"><span class="y">Year<i class="sort"></i></span><span>Final Score</span><span>Champion</span><span>Runner-up</span></div>
        ${rows.map((r) => { const [y, s, c, u] = r.split("|"); return html`<div class="row"><span class="yr">${y}</span><span>${s}</span><span>${c}</span><span>${u}</span></div>`; })}
      </div><div class="bar"></div>`;
  }
}

@customElement("year-slicer")
class YearSlicer extends LitElement {
  static styles = css`
    :host { display: flex; flex-direction: column; font-family: "Open Sans", sans-serif; position: relative; }
    .top { height: 28px; display: flex; justify-content: space-between; padding: 5px 13px 0 14px; box-sizing: border-box; font: 700 15.500px/20px "Open Sans", sans-serif; letter-spacing: -0.500px; color: #252423; }
    .top svg { margin-top: 4px; }
    .tiles { margin-left: 26.500px; display: grid; grid-template: repeat(6, 49px) / repeat(3, 59px); gap: 3.500px 1.200px; }
    .tiles div { background: #73b0ff; border: 1px solid #65799b; outline: 1px solid #78a2dc; outline-offset: -2px; box-sizing: border-box; display: flex; align-items: center; justify-content: center; font-weight: 700; font-size: 12px; letter-spacing: 0; color: #17488a; }
    .next { position: absolute; right: 6px; top: 175px; }
  `;
  render() {
    const ys = [1930, 1962, 1986, 1934, 1966, 1990, 1938, 1970, 1994, 1950, 1974, 1998, 1954, 1978, 2002, 1958, 1982, 2006];
    return html`<div class="top">Year<svg width="14" height="9" viewBox="0 0 14 9"><path d="M.5 1L7 7.500 13.500 1" fill="none" stroke="#605e5c" stroke-width="1.200"/></svg></div>
      <div class="tiles">${ys.map((y) => html`<div>${y}</div>`)}</div>
      <svg class="next" width="10" height="17" viewBox="0 0 10 17"><path d="M1 1l8 7.500L1 16" fill="none" stroke="#605e5c" stroke-width="1.200"/></svg>`;
  }
}

/* ---------- visualizations gallery ---------- */
const B = "#83beec", S = "#1a6fbf", G = "#c8c6c4", GS = "#979593";
const ax = svg`<path d="M1 0v23h23" fill="none" stroke=${INK} stroke-width="1.600"/>`;
const r = (x: number, y: number, w: number, h: number, f = "#fafafa", s = INK) => svg`<rect x=${x} y=${y} width=${w} height=${h} fill=${f} stroke=${s} stroke-width="1.300"/>`;
const funnel = svg`<path d="M11.500 12h12.500v2l-4.500 5v5.500h-4V19l-4-5z" fill="#fafafa" stroke=${INK} stroke-width="1.400"/>`;
const bolt = svg`<path d="M3-1h7L7 3.500h3.500L0 12.500l3-6.500H0z" fill="#fbd38a" stroke="#d8700f" stroke-width="1.200"/>`;
const tick = (x: number, y: number, s: number, t: string) => fit(x, y, s, 10.500, t, "#2b88d8");
const VIZ = [
  svg`${ax}${r(2, 3.500, 5, 4.500)}${r(7, 3.500, 8.500, 4.500, B, S)}${r(2, 14, 8, 4.500)}${r(10, 14, 11, 4.500, G, GS)}`,
  svg`${ax}${r(4.500, 16, 5, 7)}${r(4.500, 7.500, 5, 8.500, B, S)}${r(15, 12, 5, 11)}${r(15, 3, 5, 9, G, GS)}`,
  svg`${ax}${r(2, 1.500, 21, 4.500, B, S)}${r(2, 6.500, 12, 4)}${r(2, 11.500, 9, 4, G, GS)}${r(2, 16.500, 15, 4)}`,
  svg`${ax}${r(2.500, 1.500, 4.500, 21.500, B, S)}${r(7, 10, 4.500, 13)}${r(12.500, 14, 4.500, 9, G, GS)}${r(18, 6.500, 4.500, 16.500)}`,
  svg`${ax}${r(2, 3.500, 4, 4.500)}${r(6, 3.500, 15, 4.500, B, S)}${r(2, 14, 11, 4.500)}${r(13, 14, 8, 4.500, G, GS)}`,
  svg`${ax}${r(4.500, 19, 5, 4)}${r(4.500, 3, 5, 15.500, B, S)}${r(15, 12, 5, 11)}${r(15, 3, 5, 8, G, GS)}`,
  svg`${ax}<path d="M2 17l6.500-7L12 12.500l6-7 5 7" fill="none" stroke="#2b88d8" stroke-width="1.500"/><path d="M2 12.500l7-7 6 6.500 4-3 4-4" fill="none" stroke=${INK} stroke-width="1.500"/>`,
  svg`<path d="M12 11L18 0l5 12v11z" fill=${G} stroke=${GS}/><path d="M1 15L9 2l6 9-8 10z" fill="#fafafa" stroke=${INK} stroke-width="1.400"/><path d="M1 16.500L7 20l7.500-9L23 23H1z" fill=${B} stroke=${S} stroke-width="1.300"/>`,
  svg`${ax}<path d="M2 4l6 6 8-6 7 6v9l-6-5-7 5-8-6z" fill=${B} stroke=${S} stroke-width="1.300"/>`,
  svg`${ax}${r(5, 3, 5.500, 20, B, S)}${r(15.500, 3, 5.500, 11, G, GS)}${r(15.500, 14, 5.500, 9)}<path d="M1 20L9 12l5 5 9-7" fill="none" stroke=${INK} stroke-width="1.500"/>`,
  svg`${ax}${r(5, 11, 5, 12, B, S)}${r(10.500, 2, 5.500, 21)}${r(16, 7, 5.500, 16, G, GS)}<path d="M1 20L8 12l5 5 10-7" fill="none" stroke=${INK} stroke-width="1.500"/>`,
  svg`${ax}<path d="M2 12h6v7H2zM17 12h6v7h-6z" fill="#f8a33c" stroke="#d8700f"/><path d="M2 3q5 4 10 4t11-4v5q-6 4-11 4T2 8z" fill=${G} stroke=${GS}/><path d="M2 9q5 0 7 3t4 2 4-3 6-2v4q-4 0-6 3t-5 3-6-4-4-2z" fill=${B} stroke=${S} stroke-width="1.300"/>`,
  svg`${ax}${r(4, 7, 4.500, 16)}${r(9, 7, 4, 5, G, GS)}${r(13.500, 2, 3, 10, S, S)}${r(17.500, 2, 4.500, 21)}`,
  svg`${r(1, 1.500, 22, 6, B, S)}${r(4, 8, 16, 6, B, S)}${r(7.500, 14.500, 9.500, 6.500, B, S)}`,
  svg`${ax}<path d="M17 1h4.500v4.500H17zM5 15.500h4v4H5z" fill=${INK}/><path d="M5 5.500h3.500V9H5zM11 10h3.500v3.500H11zM17.500 15h3.500v3.500h-3.500z" fill=${B} stroke="#5a9fd6" stroke-width=".6"/>`,
  svg`<circle cx="12" cy="12" r="11" fill="#fafafa" stroke=${INK} stroke-width="1.400"/><path d="M12 1v11l7 8.500Q23 17 23 12 22.500 2 12 1z" fill=${B} stroke=${S} stroke-width="1.400"/>`,
  svg`<circle cx="12" cy="12" r="8.300" fill="none" stroke=${B} stroke-width="5.500"/><circle cx="12" cy="12" r="11" fill="none" stroke=${S} stroke-width="1.400"/><circle cx="12" cy="12" r="5.300" fill="#fafafa" stroke=${S} stroke-width="1.400"/><path d="M12 1A11 11 0 0 0 1 12h5.500A5.500 5.500 0 0 1 12 6.500z" fill="#fafafa" stroke=${GS} stroke-width="1.400"/>`,
  svg`${r(1, 1.500, 11, 11, B, S)}${r(1, 12.500, 11, 10, B, S)}${r(12, 1.500, 11, 6)}${r(12, 7.500, 5, 15)}${r(17, 7.500, 6, 8)}${r(17, 15.500, 6, 7)}<path d="M1 1.500h22v21H1z" fill="none" stroke=${INK} stroke-width="1.600"/>`,
  svg`<circle cx="13" cy="10.500" r="7.300" fill="#fff" stroke=${INK} stroke-width="1.300"/><path d="M9 6l4-1 1 3-3 3-3-1zM15 10l4-1v4l-3 3-2-3z" fill="#2f9a4c"/><path d="M10 .5Q3 3 4 11.500t10 9M6 23.500h13M12.500 20.500v3M9 0l4 1.500" fill="none" stroke=${INK} stroke-width="1.600"/>`,
  svg`<path d="M1 2q6 2 10 0h12v9q-1 7-10 10l-2-2q-7-1-7-5Q0 8 1 2z" fill=${G} stroke="#797775" stroke-width="1.300"/><path d="M1 2q5 2 9.500 0v8L3 11Q1 8 1 2zM12 12h11q-1 7-10 10l-1-3z" fill=${B} stroke=${S} stroke-width="1.400"/>`,
  svg`<path d="M15-1L1 18l11-4z" fill="#4fb0dc"/><path d="M15-1l7 26-10-11z" fill="#2a7fb8"/><path d="M12 14l10 11-5-9z" fill="#1667b8"/>`,
  svg`<path d="M1 17A11 11 0 0 1 23 17h-5.500A5.500 5.500 0 0 0 6.500 17z" fill=${B} stroke=${S} stroke-width="1.400"/><path d="M1 17A11 11 0 0 1 9 6.500l1.500 5A6 6 0 0 0 6.500 17z" fill="#fafafa" stroke=${INK} stroke-width="1.400"/><path d="M10.500 18l7-7-4 7z" fill=${INK}/>`,
  svg`${r(.8, 3, 22.400, 17)}${tick(3, 15, 18, "123")}<path d="M3.500 17.700h17" stroke=${GS} stroke-width="1.200"/>`,
  svg`${r(1, .8, 22, 22.400)}<path d="M5 4v15" stroke=${INK}/><path d="M7 6.500h12M7 14.500h12" stroke="#1a6fbf" stroke-width="2.200"/><path d="M7 10h6M7 18h6" stroke=${GS} stroke-width="1.200"/>`,
  svg`${r(.8, 2, 22.400, 18.500)}<path d="M3.500 12.500L8 5.500l4.500 7z" fill="#5fb878" stroke="#2f8a48"/><path d="M12.500 5.500h7.500L16.300 12.500z" fill="#e85a5a" stroke="#c92a2a"/><path d="M3 16.500h18" stroke=${GS} stroke-width="1.300"/>`,
  svg`${r(.8, 1.500, 22.400, 21)}<rect x="1.500" y="2" width="21" height="3.500" fill=${G}/><path d="M1 6h22" stroke=${INK}/>${r(4.500, 9, 4, 4, G, "#797775")}${r(4.500, 15.500, 4, 4, G, "#797775")}<path d="M10.500 10h15v15h-11v-5z" fill="#f3f2f1"/>${funnel}`,
  svg`${r(.8, 1.500, 22.400, 21)}<rect x="1.500" y="2" width="21" height="3" fill=${G}/><path d="M1 5.500h22M1 11h22M1 16.500h22M8.200 6v17M15.800 6v17" stroke="#797775" stroke-width="1.200"/>`,
  svg`${r(.8, 1.500, 22.400, 21)}<rect x="1.500" y="2" width="21" height="3" fill=${G}/><path d="M16 6h7v16.500H1V17h15z" fill=${B}/><path d="M1 5.500h22M1 11h22M1 16.500h22M8.200 6v17M15.800 6v17" stroke="#1a6fbf" stroke-width="1.200"/><rect x=".8" y="1.500" width="22.400" height="21" fill="none" stroke=${INK} stroke-width="1.300"/>`,
  svg`${fit(5, 19, 12.500, 21, "R", "#1f83c4", 700)}`,
  svg`${fit(-1, 17, 24, 20.500, "Py", "#1f83c4", 600)}`,
  svg`${ax}<path d="M2 5.500h14" stroke="#1a6fbf" stroke-width="1.300"/><circle cx="18.500" cy="5" r="3" fill=${B} stroke=${S} stroke-width="1.400"/><path d="M2 11.500h9M2 17h5" stroke=${INK} stroke-width="1.200"/><circle cx="13" cy="11.500" r="1.700" fill="#fff" stroke="#797775"/><circle cx="8.500" cy="17" r="1.700" fill="#fff" stroke="#797775"/>`,
  svg`<path d="M9 11.500h5V3.500h2M14 11.500v8h2" fill="none" stroke=${INK} stroke-width="1.800"/>${r(.8, 9, 8.500, 5, B, S)}${r(15, 1, 8, 5, B, S)}${r(15, 9, 8, 5, B, S)}${r(15, 17, 8, 5, B, S)}`,
  svg`<path d="M1 2h22v14H11l-5.500 5.500V16H1z" fill="#fafafa" stroke=${S} stroke-width="1.500"/>`,
  svg`<path d="M3.500 7V1.500H15l5 5v16H3.500V13M15 1.500v5h5" fill="#fafafa" stroke=${INK} stroke-width="1.300"/><circle cx="2.500" cy="9.500" r="2.300" fill=${B} stroke=${S}/><path d="M7.500 10.500h8M5.500 15.500h7" stroke="#2b88d8" stroke-width="1.200"/>`,
  svg`<path d="M6 2H1.500q0 9 6 10M18 2h4.500q0 9-6 10" fill="none" stroke=${INK} stroke-width="1.500"/><path d="M6 1h12v7.500q0 7-4.500 7.500v4h-3v-4Q6 15.500 6 8.500z" fill="#fafafa" stroke=${INK} stroke-width="1.500"/><path d="M6.500 1h11v2.500h-11zM6 20h12v3H6z" fill=${B} stroke=${S}/>`,
  svg`<path d="M3 .5h12l6 6V24H3z" fill="#fafafa" stroke=${INK} stroke-width="1.700"/><path d="M15 .5v6h6" fill="none" stroke=${INK}/><path d="M5.500 13.500h3V21h-3zM10.500 17h3v4h-3zM15.500 11.500h3V21h-3z" fill=${INK}/>`,
  svg`${r(.8, 3, 22.400, 17)}${tick(6, 15, 15, "123")}<path d="M3.500 17.700h17" stroke=${GS} stroke-width="1.200"/>${bolt}`,
  svg`${r(.8, 2, 22.400, 19.500)}<rect x="1.500" y="2.500" width="21" height="3" fill=${G}/>${r(4.500, 14.500, 4, 4, G, "#797775")}<path d="M10.500 10h15v15h-11v-5z" fill="#f3f2f1"/>${funnel}${bolt}`,
  svg`<circle cx="12" cy="12.500" r="10.800" fill="#f3f2f1" stroke="#b3b0ad" stroke-width="1.500"/><circle cx="12" cy="12.500" r="8.500" fill="#1f7fc4"/><path d="M5 7l5-2 3 3-5 5-4-1zM14 12l6-3v6l-5 4z" fill="#2f9a4c"/><path d="M4 10q8-5 16 4M5 17q8 4 14-1M12 4q-6 8 0 17M12 4q7 8 2 17" fill="none" stroke="#cfe3f2"/>`,
  svg`<g fill="none" stroke="#8f3b9c" stroke-width="1.300"><path d="M6.500 7L11 2h3l4 5-5.500 5.500zM12 12.500L17.500 7 23 12l-5.500 6zM1 12l5.500-5.500L12 12l-5.500 6zM6.500 18L12 12.500l6 5.500-4 4.500h-3z"/></g>`,
  svg`<g fill="#fafafa" stroke="#1570e0" stroke-width="1.500"><path d="M1 2h15l7 10-7 10H1l7.500-10z"/><path d="M1 22L15.500 2M8 22L19.500 7M1 2l7.500 10" fill="none"/></g>`,
  svg`<path d="M3 9.500h1.600M11 9.500h1.600M19 9.500h1.600" stroke=${INK} stroke-width="1.800"/>`,
];

const dbl = (flip = false) => svg`<path d=${flip ? "M8 1L1 8l7 7M15 1L8 8l7 7" : "M1 1l7 7-7 7M8 1l7 7-7 7"} fill="none" stroke="#252423" stroke-width="1.300"/>`;

@customElement("viz-pane")
class VizPane extends LitElement {
  static styles = css`
    :host { width: 227px; box-sizing: border-box; border-left: 1px solid #e1dfdd; border-right: 1px solid #e1dfdd; background: #f3f2f1; display: flex; flex-direction: column; font: 14.500px/20px "Open Sans", sans-serif; letter-spacing: -0.270px; color: #252423; }
    .hd { display: flex; justify-content: space-between; align-items: center; padding: 1px 10px 0; height: 48px; box-sizing: border-box; font-size: 18.500px; font-weight: 600; letter-spacing: -0.380px; }
    .sub { padding: 0 10px; height: 25px; margin-top: -1px; font-weight: 500; font-size: 15px; letter-spacing: -0.270px; }
    .modes { display: flex; padding-left: 10px; gap: 43px; }
    .mode { width: 40px; height: 40px; display: grid; place-items: center; }
    .mode.on { background: #d2d0ce; border-radius: 2px; }
    .gallery { display: grid; grid-template-columns: repeat(6, 24px); grid-auto-rows: 24px; gap: 11px; padding: 12px 0 11px 14px; border-bottom: 1px solid #d8d6d4; letter-spacing: 0; }
    .gallery svg { overflow: visible; }
    .lab { padding-left: 15px; white-space: nowrap; }
    .box { margin: 0 7px 0 5px; background: #fff; border: 1px dashed #c8c6c4; border-radius: 2px; box-sizing: border-box; display: flex; align-items: center; padding-left: 12px; white-space: nowrap; }
    .line { display: flex; justify-content: space-between; align-items: center; padding: 0 27px 0 15px; height: 34px; }
    .tog { width: 40px; height: 20px; border-radius: 10px; box-sizing: border-box; border: 1px solid #797775; background: #fff; display: flex; align-items: center; font-size: 11px; color: #605e5c; padding: 0 5px; justify-content: space-between; }
    .tog i { width: 10px; height: 10px; border-radius: 50%; background: #605e5c; }
    .tog.on { background: #117865; border-color: #117865; color: #fff; flex-direction: row-reverse; }
    .tog.on i { background: #fff; }
  `;
  render() {
    return html`
      <div class="hd">Visualizations<svg width="16" height="16" viewBox="0 0 16 16">${dbl()}</svg></div>
      <div class="sub">Build visual</div>
      <div class="modes">
        <div class="mode on"><svg width="30" height="31" viewBox="0 0 30 31"><path d="M0 1h24" stroke="#252423" stroke-width="1.400"/><g fill="#117865" stroke="#252423" stroke-width="1.500" stroke-dasharray="2.500 1.500"><rect x="1" y="7" width="28" height="9"/><rect x="1" y="20.500" width="28" height="9"/></g></svg></div>
        <div class="mode"><svg width="32" height="32" viewBox="0 0 32 32" fill="none" stroke="#252423" stroke-width="1.500"><path d="M6 30H1.500V1.500H14l8 8.500v3M14 1.500V10h8"/><path d="M30 12Q20 17 17 24l2.500 2Q27 22 30 12zM16 24q-4 0-4 3t-4 3q9 1.500 12-3z"/></svg></div>
      </div>
      <svg width="225" height="17" viewBox="0 0 225 17"><path d="M0 15.500h20l10-9.500 10 9.500h185" fill="none" stroke="#979593"/></svg>
      <div class="gallery">${VIZ.map((v) => html`<svg width="24" height="24" viewBox="0 0 24 24">${v}</svg>`)}</div>
      <div class="lab" style="margin-top:11px">Values</div>
      <div class="box" style="height:35px;margin-top:6px">Add data fields here</div>
      <div class="lab" style="margin-top:14px">Drill through</div>
      <div class="line" style="margin-top:4px">Cross-report<span class="tog"><i></i>Off</span></div>
      <div class="line">Keep all filters<span class="tog on"><i></i>On</span></div>
      <div class="box" style="height:32px;margin-top:6px;padding-left:10px;letter-spacing:-.15px">Add drill-through fields here</div>`;
  }
}

@customElement("data-pane")
class DataPane extends LitElement {
  static styles = css`
    :host { flex: 1; background: #f3f2f1; display: flex; flex-direction: column; font: 14.500px/30px "Open Sans", sans-serif; letter-spacing: -0.320px; color: #4a4846; }
    .hd { display: flex; justify-content: space-between; align-items: center; padding: 1px 10px 0 11px; height: 48px; box-sizing: border-box; font-size: 18.500px; font-weight: 600; color: #252423; }
    .search { margin: 9px 5px 12px 5px; height: 33px; border: 1px solid #797775; border-radius: 2px; box-sizing: border-box; display: flex; align-items: center; gap: 8px; padding-left: 9px; font-size: 16.800px; color: #605e5c; }
    .row { height: 30px; display: flex; align-items: center; white-space: nowrap; }
    .t { padding-left: 11px; }
    .t .c { width: 14px; margin-right: 3px; }
    .t .k { margin-right: 6px; }
    .f { padding-left: 48px; }
    .cb { width: 15px; height: 15px; border: 1px solid #797775; border-radius: 2px; box-sizing: border-box; background: #fafafa; margin-right: 9px; }
    .i { width: 16px; height: 16px; margin-right: 7px; display: grid; place-items: center; }
  `;
  render() {
    const sigma = html`<svg width="14" height="16" viewBox="0 0 14 16"><path d="M13 1H1.500L8 8l-6.500 7H13" fill="none" stroke=${INK} stroke-width="1.500"/></svg>`;
    const globe = html`<svg width="16" height="16" viewBox="0 0 16 16" fill="none" stroke=${INK} stroke-width="1.400"><circle cx="8" cy="8" r="7.200"/><ellipse cx="8" cy="8" rx="3.400" ry="7.200"/><path d="M1.500 5.500h13M1.500 10.500h13"/></svg>`;
    const rows: [string, unknown][] = [["Champion", nothing], ["Final Score", nothing], ["Host", globe], ["No. ofteams", sigma], ["Runner-up", nothing], ["Team 1 score", sigma], ["Team 2 score", sigma], ["Year", sigma]];
    return html`
      <div class="hd">Data<svg width="16" height="16" viewBox="0 0 16 16">${dbl()}</svg></div>
      <div class="search"><svg width="19" height="19" viewBox="0 0 19 19" fill="none" stroke="#605e5c" stroke-width="1.200"><circle cx="11.500" cy="7.500" r="6"/><path d="M7 12L1 18"/></svg>Search</div>
      <div class="row t"><svg class="c" width="14" height="16" viewBox="0 0 14 16"><path d="M2 1.500L8.500 8 2 14.500" fill="none" stroke="#605e5c" stroke-width="1.200"/></svg>
        <svg class="k" width="18" height="18" viewBox="0 0 18 18" fill="none" stroke=${INK} stroke-width="1.400"><rect x="1" y="1" width="13" height="14.500" rx="3"/><path d="M16 3.500q1 1 1 3V13q0 4.500-4 4.500H6"/><rect x="4" y="4" width="7" height="2.500"/><path d="M4 9.500h1.500M7 9.500h1.500M10 9.500h1.500M4 12.500h1.500M7 12.500h1.500M10 12.500h1.500" stroke-width="1.600"/></svg>DAX Measures</div>
      <div class="row t"><svg class="c" width="14" height="9" viewBox="0 0 14 9" style="margin-left:-1px;margin-right:4px"><path d="M.5 1L7 7.500 13.500 1" fill="none" stroke="#605e5c" stroke-width="1.200"/></svg>
        <svg class="k" width="18" height="18" viewBox="0 0 18 18" fill="none" stroke=${INK} stroke-width="1.500"><rect x="1" y="1.500" width="14" height="14" rx="3"/><path d="M5.500 1.500v14M10.500 1.500v14M1 6h14M1 11h14"/></svg>Results</div>
      ${rows.map(([t, i]) => html`<div class="row f"><i class="cb"></i><i class="i">${i}</i>${t}</div>`)}`;
  }
}

/* ---------- taskbar ---------- */
@customElement("task-bar")
class TaskBar extends LitElement {
  static styles = css`
    :host { height: 60px; display: flex; align-items: center; font: 15px/20px "Open Sans", sans-serif; letter-spacing: -0.300px; color: #1b1b1b; background: linear-gradient(90deg, #dfdbd6 0, #eadbca 5%, #dcdcda 13%, #dddbd7 26%, #ebdacc 33%, #efd9d2 40%, #eedad2 52%, #e3dbd5 66%, #dadad8 77%, #dcdcd6 100%); }
    .pill { width: 273px; height: 38px; border-radius: 19px; background: #f6f4f2; border: 1px solid #cfccc8; box-sizing: border-box; margin: 0 15px 0 18px; display: flex; align-items: center; padding-left: 13px; font-size: 16.400px; color: #5a5856; }
    .pill .q { margin-right: 12px; }
    .film { margin-left: auto; margin-right: 17px; }
    .start { margin-left: 26px; margin-top: 1px; }
    .app { height: 48px; display: flex; flex-direction: column; align-items: center; justify-content: space-between; padding-top: 9px; box-sizing: border-box; width: 32px; margin: 1px 23px 0 0; }
    .app::after { content: ""; width: 8px; height: 4px; border-radius: 2px; background: #85817c; }
    .app.on { width: 44px; margin-left: -7px; background: #f7efea; border-radius: 5px; box-shadow: 0 0 0 1px #e4dcd6, 4px 0 0 #f3e6df; }
    .app.on::after { width: 19px; background: #0078d4; }
    .tray { margin-left: auto; display: flex; align-items: center; }
    .clock { text-align: right; width: 88px; line-height: 20px; font-size: 14.300px; letter-spacing: -0.200px; margin-right: 11px; }
  `;
  render() {
    const star = (x: number, y: number, s: number) => svg`<path transform="translate(${x} ${y}) scale(${s})" d="M0-10L3-3.500 10-3 4.500 2 6 9 0 5-6 9-4.500 2-10-3-3-3.500z" fill="#f3a13c"/>`;
    return html`
      <svg class="start" width="29" height="29" viewBox="0 0 29 29"><defs><linearGradient id="w" x1="0" y1="0" x2="1" y2="1"><stop offset="0" stop-color="#4cc8f8"/><stop offset="1" stop-color="#0a6bcb"/></linearGradient></defs><path d="M0 0h14v14H0zM15 0h14v14H15zM0 15h14v14H0zM15 15h14v14H15z" fill="url(#w)"/></svg>
      <div class="pill">
        <svg class="q" width="19" height="20" viewBox="0 0 19 20" fill="none" stroke="#252423" stroke-width="2"><circle cx="8" cy="8.500" r="6.800"/><path d="M12.500 13.500l5 5"/></svg>Search
        <svg class="film" width="43" height="33" viewBox="0 0 43 33"><rect x="0" y="0" width="13" height="33" rx="2" fill="#e6b53a"/><rect x="2.500" y="1.500" width="8" height="8" fill="#7a3f10"/><rect x="2.500" y="11.500" width="8" height="9" fill="#7a3f10"/><rect x="2.500" y="22.500" width="8" height="9" fill="#7a3f10"/>${star(6.500, 4, 0.45)}${star(7, 15, 0.5)}${star(6.500, 27, 0.48)}<rect x="16" y="0" width="27" height="33" fill="#e6b53a"/><rect x="20.500" y="0" width="17.500" height="6" fill="#7a3f10"/><rect x="20.500" y="8.500" width="17.500" height="17" fill="#7a3f10"/><rect x="20.500" y="28" width="17.500" height="5" fill="#7a3f10"/>${star(29.500, 17, 1.05)}${star(29.500, 1.500, 0.5)}<path d="M17.500 0v33M41.300 0v33" stroke="#c9683c" stroke-width="1.500" stroke-dasharray="2 2"/><path d="M13 0v33M16 0v33" stroke="#c9577a" stroke-width="1"/></svg>
      </div>
      <div class="app"><svg width="30" height="30" viewBox="0 0 30 30"><path d="M0 4q0-2 2-2h8l3 3h-3v6H0z" fill="#d99a0b"/><rect y="5" width="30" height="23.500" rx="1.500" fill="#fdc93a"/><path d="M5 28.500V23q0-2.500 2.500-2.500h15Q25 20.500 25 23v5.500z" fill="#1272c4"/><path d="M10 25h10" stroke="#0a4a86" stroke-width="1.500"/></svg></div>
      <div class="app"><svg width="30" height="30" viewBox="0 0 30 30"><defs><linearGradient id="e1" x1="0" y1="0" x2="1" y2=".4"><stop offset="0" stop-color="#1b9de2"/><stop offset=".6" stop-color="#35c7c9"/><stop offset="1" stop-color="#6be05a"/></linearGradient></defs><circle cx="15" cy="15" r="15" fill="#0f6fc6"/><path d="M0 14Q1 0 15 0t15 13q0 7-8 7-5 0-5-3 1-2 0-4-2-4-8-3T0 14z" fill="url(#e1)"/><path d="M12 12q-5 6 0 12t16 0q-4 6-12 6T5 22q-1-8 7-10z" fill="#0b4d96"/><path d="M17 13q-5 2-3 6t12 3.500l4-7-8 4q-5 0-5-2.500 1-2 0-4z" fill="#e9e4df"/></svg></div>
      <div class="app"><svg width="30" height="30" viewBox="0 0 30 30"><ellipse cx="15" cy="16.500" rx="14.500" ry="13" fill="#e23a34"/><path d="M15 5l-7-2 4 4-3 3 6-2 6 2-3-3 4-4-5 1 0-4h-2z" fill="#3d8b40"/><path d="M3 20q1 4 4 6" stroke="#fff" stroke-width="1.500" fill="none"/></svg></div>
      <div class="app on"><svg width="31" height="31" viewBox="0 0 31 31"><rect width="31" height="31" fill="#0a78d4"/><path d="M17 0h10v31H17z" fill="#c8870f"/><path d="M10 8h10v23H10z" fill="#e9b635"/><path d="M3 16h11v15H3z" fill="#f6d565"/></svg></div>
      <div class="tray">
        <svg width="14" height="10" viewBox="0 0 14 10" style="margin-right:27px"><path d="M1 8.500l6-6.500 6 6.500" fill="none" stroke="#1b1b1b" stroke-width="1.500"/></svg>
        <span style="width:51px;letter-spacing:-.55px">ENG</span>
        <svg width="20" height="17" viewBox="0 0 20 17" fill="none" stroke="#1b1b1b" stroke-width="1.500" style="margin-right:10px"><path d="M1 6Q10-3 19 6M3.500 9q6.500-6.500 13 0M6 12q4-4 8 0"/><circle cx="10" cy="14.500" r="1.300" fill="#1b1b1b"/></svg>
        <svg width="20" height="16" viewBox="0 0 20 16" fill="none" stroke="#1b1b1b" stroke-width="1.300" style="margin-right:10px"><path d="M1 5.500h3.500L9 1.500v13l-4.500-4H1zM11 5.500q2 2.500 0 5"/><path d="M13.500 3.500q4 4.500 0 9M16 1q6 7 0 14" stroke="#b3b1ae"/></svg>
        <svg width="22" height="20" viewBox="0 0 22 20"><path d="M5 4h11q2.500 0 2.500 2.500V14q0 2-2 2H4.500q-2 0-2-2V9" fill="none" stroke="#1b1b1b" stroke-width="1.500"/><path d="M6.500 6.500H16V11l-4 1-1 2H5V10z" fill="#1b1b1b"/><path d="M4 0L0 6h3L1.500 10 6 4H3.500zM19 7h1.500v4H19z" fill="#1b1b1b"/><path d="M16 19.500l-4-4q-1.500-2.500 1-3.500 2-.5 3 1 1-1.500 3-1 2.500 1 1 3.500z" fill="#1b1b1b" stroke="#dadad8" stroke-width=".8"/></svg>
        <div class="clock">7:46 PM<br />3/10/2024</div>
        <svg width="17" height="20" viewBox="0 0 17 20" style="margin-right:22px;margin-top:2px"><path d="M8.500.5q6 0 6 6.500v5l2 3.500H.5l2-3.500V7q0-6.500 6-6.500zM5.500 17h6q-.5 2.500-3 2.500t-3-2.500z" fill="#003e92"/></svg>
        <svg width="30" height="29" viewBox="0 0 30 29" style="margin-right:24px;margin-top:2px"><defs><linearGradient id="c1" x1="0" y1="0" x2="0" y2="1"><stop offset="0" stop-color="#1b9af0"/><stop offset=".55" stop-color="#45b87a"/><stop offset="1" stop-color="#e8c52a"/></linearGradient><linearGradient id="c2" x1="0" y1="0" x2="0" y2="1"><stop offset="0" stop-color="#9a5cf0"/><stop offset="1" stop-color="#f2688e"/></linearGradient></defs><path d="M7 0h11q3 0 4 4l1 4h-6q-2 0-3 4l-2 6q-1 3-4 3H4q-5 0-3.500-6L3.500 4Q4.500 0 7 0z" fill="url(#c1)"/><path d="M16 0q5 0 6 5l1 3h-7z" fill="#1556c9"/><path d="M18 8h7q4 1 3 6l-2 6h-15q3 0 4-5l1-4q.5-3 2-3z" fill="url(#c2)"/><rect x="6.500" y="19" width="23" height="9.500" rx="2" fill="#fdc40f"/>${fit(10, 26.800, 16, 7.800, "PRE", "#111", 800)}</svg>
      </div>`;
  }
}

/* ---------- page ---------- */
@customElement("app-root")
class AppRoot extends LitElement {
  @property() zoom = "82%";
  static styles = css`
    :host { display: flex; flex-direction: column; width: 1920px; height: 1080px; overflow: hidden; background: #f3f2f1; font-family: "Open Sans", sans-serif; color: #252423; }
    .main { display: flex; height: 790px; }
    .rail { width: 51px; box-sizing: border-box; border-right: 1px solid #e1dfdd; background: linear-gradient(#117865 0 0) no-repeat 0 0 / 3px 49px, #f3f2f1; display: flex; flex-direction: column; align-items: center; padding-top: 16px; }
    .rail svg { flex: none; }
    .work { width: 1417px; display: flex; flex-direction: column; }
    .stage { display: flex; height: 746px; }
    .canvas { width: 1377px; background: #01b305; box-sizing: border-box; border-right: 1px solid #c8c6c4; padding: 0 32px 8px 33px; }
    .page { height: 738px; box-sizing: border-box; padding: 19px 7px 0 18px; display: grid; grid-template: 349px 348px / 638px 397px 230px; column-gap: 10px; row-gap: 11px;
      background: repeating-linear-gradient(#77706a 0 2px, transparent 2px 4px) no-repeat 0 0 / 1px 100%, repeating-linear-gradient(#77706a 0 2px, transparent 2px 4px) no-repeat 100% 0 / 1px 100%, repeating-linear-gradient(90deg, #77706a 0 2px, transparent 2px 4px) no-repeat 0 100% / 100% 1px; }
    .card { background: #fff; overflow: hidden; }
    .wide { grid-column: span 2; }
    .filters { flex: 1; background: #fff; display: flex; flex-direction: column; align-items: center; padding-top: 16px; box-sizing: border-box; }
    .filters span { writing-mode: vertical-rl; font-weight: 600; font-size: 17px; letter-spacing: 0.300px; margin-top: 10px; line-height: 20px; }
    .pages { height: 44px; display: flex; align-items: flex-start; box-sizing: border-box; padding-left: 12.500px; }
    .view { width: 30px; height: 39px; display: flex; flex-direction: column; align-items: center; justify-content: flex-end; gap: 8px; }
    .view i { width: 30px; height: 4px; border-radius: 2px; background: #117865; }
    .page-tab { width: 95px; height: 44px; box-sizing: border-box; border-left: 1px solid #979593; border-right: 1px solid #c8c6c4; border-bottom: 5px solid #117865; background: #fff; text-align: center; font-size: 14.500px; line-height: 44px; letter-spacing: -0.400px; font-weight: 500; }
    .add { width: 49px; height: 40px; margin-top: 2px; background: #117865; display: grid; place-items: center; }
    .status { height: 30px; box-sizing: border-box; border-top: 1px solid #dcdad8; border-bottom: 1px solid #000; display: flex; align-items: center; padding-left: 5px; font-size: 14.500px; letter-spacing: -0.250px; color: #4a4846; }
    .zoom { margin-left: auto; display: flex; align-items: center; color: #605e5c; }
  `;
  render() {
    return html`
      <title-bar></title-bar>
      <ribbon-bar></ribbon-bar>
      <div class="main">
        <div class="rail">
          <svg width="18" height="19" viewBox="0 0 18 19" fill="none" stroke="#252423" stroke-width="1.600"><path d="M1 0v17.500h17M4 3h3v12H4zM9 7.500h2.500V15H9zM13.500 1H16v14h-2.500z"/></svg>
          <svg width="22" height="20" viewBox="0 0 22 20" fill="none" stroke="#797775" stroke-width="1.500" style="margin-top:29px"><rect x="1" y="1" width="19.500" height="18"/><path d="M1 4.500h19.500M1 9.500h19.500M1 14h19.500M7.500 4.500V19M14 4.500V19"/></svg>
          <svg width="24" height="24" viewBox="0 0 24 24" fill="none" stroke="#797775" stroke-width="1.400" style="margin-top:28px"><rect x="1" y="8" width="9" height="9"/><path d="M1 11h9M5.500 8V4.500H14M5.500 17v3.500H14"/><rect x="14" y="1" width="9" height="9"/><path d="M14 4h9"/><rect x="14" y="14" width="9" height="9"/><path d="M14 17h9"/></svg>
        </div>
        <div class="work">
          <div class="stage">
            <div class="canvas"><div class="page">
              <map-visual class="card"></map-visual>
              <line-visual class="card wide"></line-visual>
              <champions-visual class="card"></champions-visual>
              <results-visual class="card"></results-visual>
              <year-slicer class="card"></year-slicer>
            </div></div>
            <div class="filters">
              <svg width="16" height="16" viewBox="0 0 16 16">${dbl(true)}</svg>
              <svg width="16" height="17" viewBox="0 0 16 17" style="margin:19px -5px 0 0"><path d="M15 1v15h-1.500L8 10.500H1V6.500h7L13.500 1z" fill="none" stroke="#252423" stroke-width="1.400"/></svg>
              <span>Filters</span>
            </div>
          </div>
          <div class="pages">
            <div class="view"><svg width="25" height="19" viewBox="0 0 25 19" fill="none" stroke="#4a4846" stroke-width="1.500"><path d="M1 1h23v13.500H1zM12.500 14.500V18M8 18h9"/></svg><i></i></div>
            <svg width="17" height="26" viewBox="0 0 17 26" fill="none" stroke="#4a4846" stroke-width="1.600" style="margin:6px 25px 0 31px"><rect x="1" y="1" width="15" height="24" rx="2"/><path d="M7 21.500h3"/></svg>
            <svg width="35" height="12" viewBox="0 0 35 12" style="margin:16px 8px 0 .5px"><path d="M6 0v12L0 6zM28 0v12l6-6z" fill="#c3c1bf"/></svg>
            <div class="page-tab">Page 1</div>
            <div class="add"><svg width="14" height="14" viewBox="0 0 14 14"><path d="M7 0v14M0 7h14" stroke="#fff" stroke-width="3.200"/></svg></div>
          </div>
        </div>
        <viz-pane></viz-pane>
        <data-pane></data-pane>
      </div>
      <div class="status">Page 1 of 1
        <div class="zoom">
          <svg width="154" height="16" viewBox="0 0 154 16" stroke="#605e5c" fill="none"><path d="M.5 7.500h6" stroke-width="1.800"/><path d="M12 8.500h125M74.500 5v7"/><path d="M61.500 1.500v13" stroke-width="5"/><path d="M144 8h10M149 3v10" stroke-width="1.900"/></svg>
          <span style="width:52px;margin-left:16px">${this.zoom}</span>
          <svg width="21" height="17" viewBox="0 0 21 17" fill="none" stroke="#605e5c" stroke-width="1.600" style="margin-right:22px"><path d="M1 1h19v15H1z"/><path d="M4 6.500V4h3M14 4h3v2.500M17 10.500V13h-3M7 13H4v-2.500" stroke-width="1.300"/></svg>
        </div>
      </div>
      <task-bar></task-bar>`;
  }
}
